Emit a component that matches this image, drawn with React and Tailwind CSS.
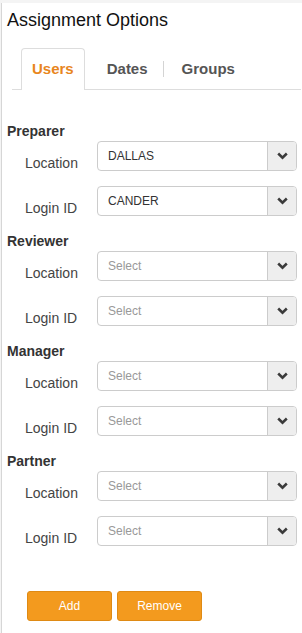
import React from 'react';

const Chevron = () => (
    <svg width="11" height="8" viewBox="0 0 11 8" className="block">
        <polyline points="1.2,1.5 5.5,5.6 9.8,1.5" fill="none" stroke="#3b3b3b" strokeWidth="2.6" />
    </svg>
);

const SelectBox = ({ value }) => (
    <div className="flex h-[30px] w-[200px] rounded-[4px] border border-[#cccccc] bg-white overflow-hidden">
        <div className={`flex-1 flex items-center pl-[10px] text-[12px] ${value ? 'text-[#333333]' : 'text-[#999999]'}`}>
            {value || 'Select'}
        </div>
        <div className="w-[29px] flex items-center justify-center bg-[#eeeeee] border-l border-[#cccccc]">
            <Chevron />
        </div>
    </div>
);

const Row = ({ label, value, className = '' }) => (
    <div className={`flex items-start pl-[23px] ${className}`}>
        <div className="w-[72px] pt-[14px] text-[14px] leading-[16px] text-[#444444]">{label}</div>
        <SelectBox value={value} />
    </div>
);

const Section = ({ title, location, login, className = '' }) => (
    <div className={`flex flex-col ${className}`}>
        <div className="pl-[5px] text-[14px] font-bold leading-[16px] text-[#333333]">{title}</div>
        <Row label="Location" value={location} className="mt-[2px]" />
        <Row label="Login ID" value={login} className="mt-[15px]" />
    </div>
);

export default function App() {
    return (
        <div
            className="min-h-screen bg-[#f4f4f4] pt-[3px] pl-[1px]"
            style={{ fontFamily: '"Liberation Sans", Arial, sans-serif' }}
        >
            <div className="min-h-[630px] bg-white border-l border-[#d6d6d6] pt-[6px]">
                <div className="pl-[5px] text-[18px] leading-[22px] text-[#111111]">Assignment Options</div>

                <div className="mt-[17px] ml-[10px] mr-[1px] flex items-center border-b border-[#dddddd] text-[15px] font-bold leading-[18px]">
                    <div className="ml-[9px] relative -mb-px bg-white border border-b-0 border-[#dddddd] rounded-t-[4px] px-[10px] pt-[11px] pb-[12px] text-[#e8861e]">
                        Users
                    </div>
                    <div className="ml-[22px] text-[#555555]">Dates</div>
                    <div className="ml-[15px] w-px h-[16px] bg-[#d4d4d4]" />
                    <div className="ml-[18px] text-[#555555]">Groups</div>
                </div>

                <Section title="Preparer" location="DALLAS" login="CANDER" className="mt-[33px]" />
                <Section title="Reviewer" className="mt-[17px]" />
                <Section title="Manager" className="mt-[17px]" />
                <Section title="Partner" className="mt-[17px]" />

                <div className="mt-[45px] flex gap-[5px] pl-[25px]">
                    <button className="w-[85px] h-[30px] rounded-[3px] border border-[#df8a14] bg-[#f39a1e] text-[12px] text-white">
                        Add
                    </button>
                    <button className="w-[85px] h-[30px] rounded-[3px] border border-[#df8a14] bg-[#f39a1e] text-[12px] text-white">
                        Remove
                    </button>
                </div>
            </div>
        </div>
    );
}
